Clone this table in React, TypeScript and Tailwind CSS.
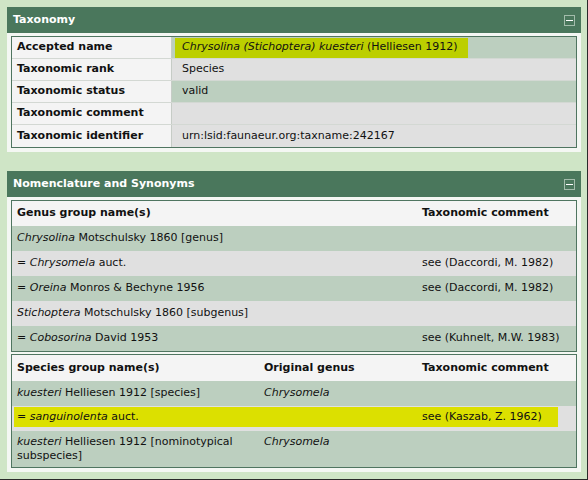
import React from 'react'

const yellowTaxon = 'bg-[#bccf00]'

function Panel({ title, children, className }: { title: string; children: React.ReactNode; className?: string }) {
  return (
    <div className={`w-[574px] bg-[#f4f7f3] ${className ?? ''}`}>
      <div className="h-[26px] bg-[#4a775c] flex items-center justify-between pl-[6px] pr-[6px]">
        <span className="text-white font-bold">{title}</span>
        <span className="w-[11px] h-[11px] border border-[#a3bcab] flex items-center justify-center">
          <span className="w-[7px] h-px bg-white" />
        </span>
      </div>
      <div className="px-[4px] pt-[3px] pb-[4px]">{children}</div>
    </div>
  )
}

const taxRows = [
  { label: 'Accepted name', bg: 'bg-[#bccfbf]' },
  { label: 'Taxonomic rank', bg: 'bg-[#e0e0e0]', value: 'Species' },
  { label: 'Taxonomic status', bg: 'bg-[#bccfbf]', value: 'valid' },
  { label: 'Taxonomic comment', bg: 'bg-[#e0e0e0]', value: '' },
  { label: 'Taxonomic identifier', bg: 'bg-[#e0e0e0]', value: 'urn:lsid:faunaeur.org:taxname:242167' },
]

function TaxonomyTable() {
  return (
    <div className="border border-[#4f7560]">
      {taxRows.map((row, i) => (
        <div
          key={row.label}
          className={`grid grid-cols-[160px_1fr] h-[22px] ${i < taxRows.length - 1 ? 'border-b border-[#d3d8d3]' : ''}`}
        >
          <div className="bg-[#f4f4f4] border-r border-[#c6ccc6] pl-[5px] font-bold flex items-center">{row.label}</div>
          <div className={`${row.bg} flex items-center`}>
            {i === 0 ? (
              <span className={`${yellowTaxon} ml-[3px] pl-[7px] pr-[10px] h-[20px] flex items-center`}>
                <i>Chrysolina (Stichoptera) kuesteri</i>&nbsp;(Helliesen 1912)
              </span>
            ) : (
              <span className="pl-[10px]">{row.value}</span>
            )}
          </div>
        </div>
      ))}
    </div>
  )
}

const genusRows: { name: React.ReactNode; comment: string; bg: string }[] = [
  { name: <><i>Chrysolina</i> Motschulsky 1860 [genus]</>, comment: '', bg: 'bg-[#bccfbf]' },
  { name: <>= <i>Chrysomela</i> auct.</>, comment: 'see (Daccordi, M. 1982)', bg: 'bg-[#e0e0e0]' },
  { name: <>= <i>Oreina</i> Monros &amp; Bechyne 1956</>, comment: 'see (Daccordi, M. 1982)', bg: 'bg-[#bccfbf]' },
  { name: <><i>Stichoptera</i> Motschulsky 1860 [subgenus]</>, comment: '', bg: 'bg-[#e0e0e0]' },
  { name: <>= <i>Cobosorina</i> David 1953</>, comment: 'see (Kuhnelt, M.W. 1983)', bg: 'bg-[#bccfbf]' },
]

function GenusTable() {
  return (
    <div className="border border-[#4f7560]">
      <div className="grid grid-cols-[405px_1fr] h-[25px] bg-[#f4f4f4] font-bold items-center">
        <div className="pl-[5px]">Genus group name(s)</div>
        <div className="pl-[5px]">Taxonomic comment</div>
      </div>
      {genusRows.map((row, i) => (
        <div key={i} className={`grid grid-cols-[405px_1fr] h-[25px] items-center ${row.bg}`}>
          <div className="pl-[5px]">{row.name}</div>
          <div className="pl-[5px]">{row.comment}</div>
        </div>
      ))}
    </div>
  )
}

function SpeciesTable() {
  return (
    <div className="border border-[#4f7560] mt-[2px]">
      <div className="grid grid-cols-[247px_158px_1fr] h-[26px] bg-[#f4f4f4] font-bold items-center">
        <div className="pl-[5px]">Species group name(s)</div>
        <div className="pl-[5px]">Original genus</div>
        <div className="pl-[5px]">Taxonomic comment</div>
      </div>
      <div className="grid grid-cols-[247px_158px_1fr] h-[25px] items-center bg-[#bccfbf]">
        <div className="pl-[5px]"><i>kuesteri</i> Helliesen 1912 [species]</div>
        <div className="pl-[5px]"><i>Chrysomela</i></div>
        <div className="pl-[5px]"></div>
      </div>
      <div className="h-[25px] bg-[#e0e0e0] pt-px">
        <div className="ml-[2px] w-[544px] h-[20px] bg-[#dce000] grid grid-cols-[245px_158px_1fr] items-center">
          <div className="pl-[3px]">= <i>sanguinolenta</i> auct.</div>
          <div className="pl-[5px]"></div>
          <div className="pl-[5px]">see (Kaszab, Z. 1962)</div>
        </div>
      </div>
      <div className="grid grid-cols-[247px_158px_1fr] py-[4px] leading-[14px] bg-[#bccfbf]">
        <div className="pl-[5px]"><i>kuesteri</i> Helliesen 1912 [nominotypical subspecies]</div>
        <div className="pl-[5px]"><i>Chrysomela</i></div>
        <div className="pl-[5px]"></div>
      </div>
    </div>
  )
}

export default function App() {
  return (
    <div className="w-[588px] h-[480px] overflow-hidden bg-[#cfe5c6] text-[11px] text-[#111] font-['Verdana','DejaVu_Sans',sans-serif] pt-[7px] pl-[7px] border-r border-b border-[#2a2a2a]">
      <Panel title="Taxonomy">
        <TaxonomyTable />
      </Panel>
      <Panel title="Nomenclature and Synonyms" className="mt-[19px]">
        <GenusTable />
        <SpeciesTable />
      </Panel>
    </div>
  )
}
